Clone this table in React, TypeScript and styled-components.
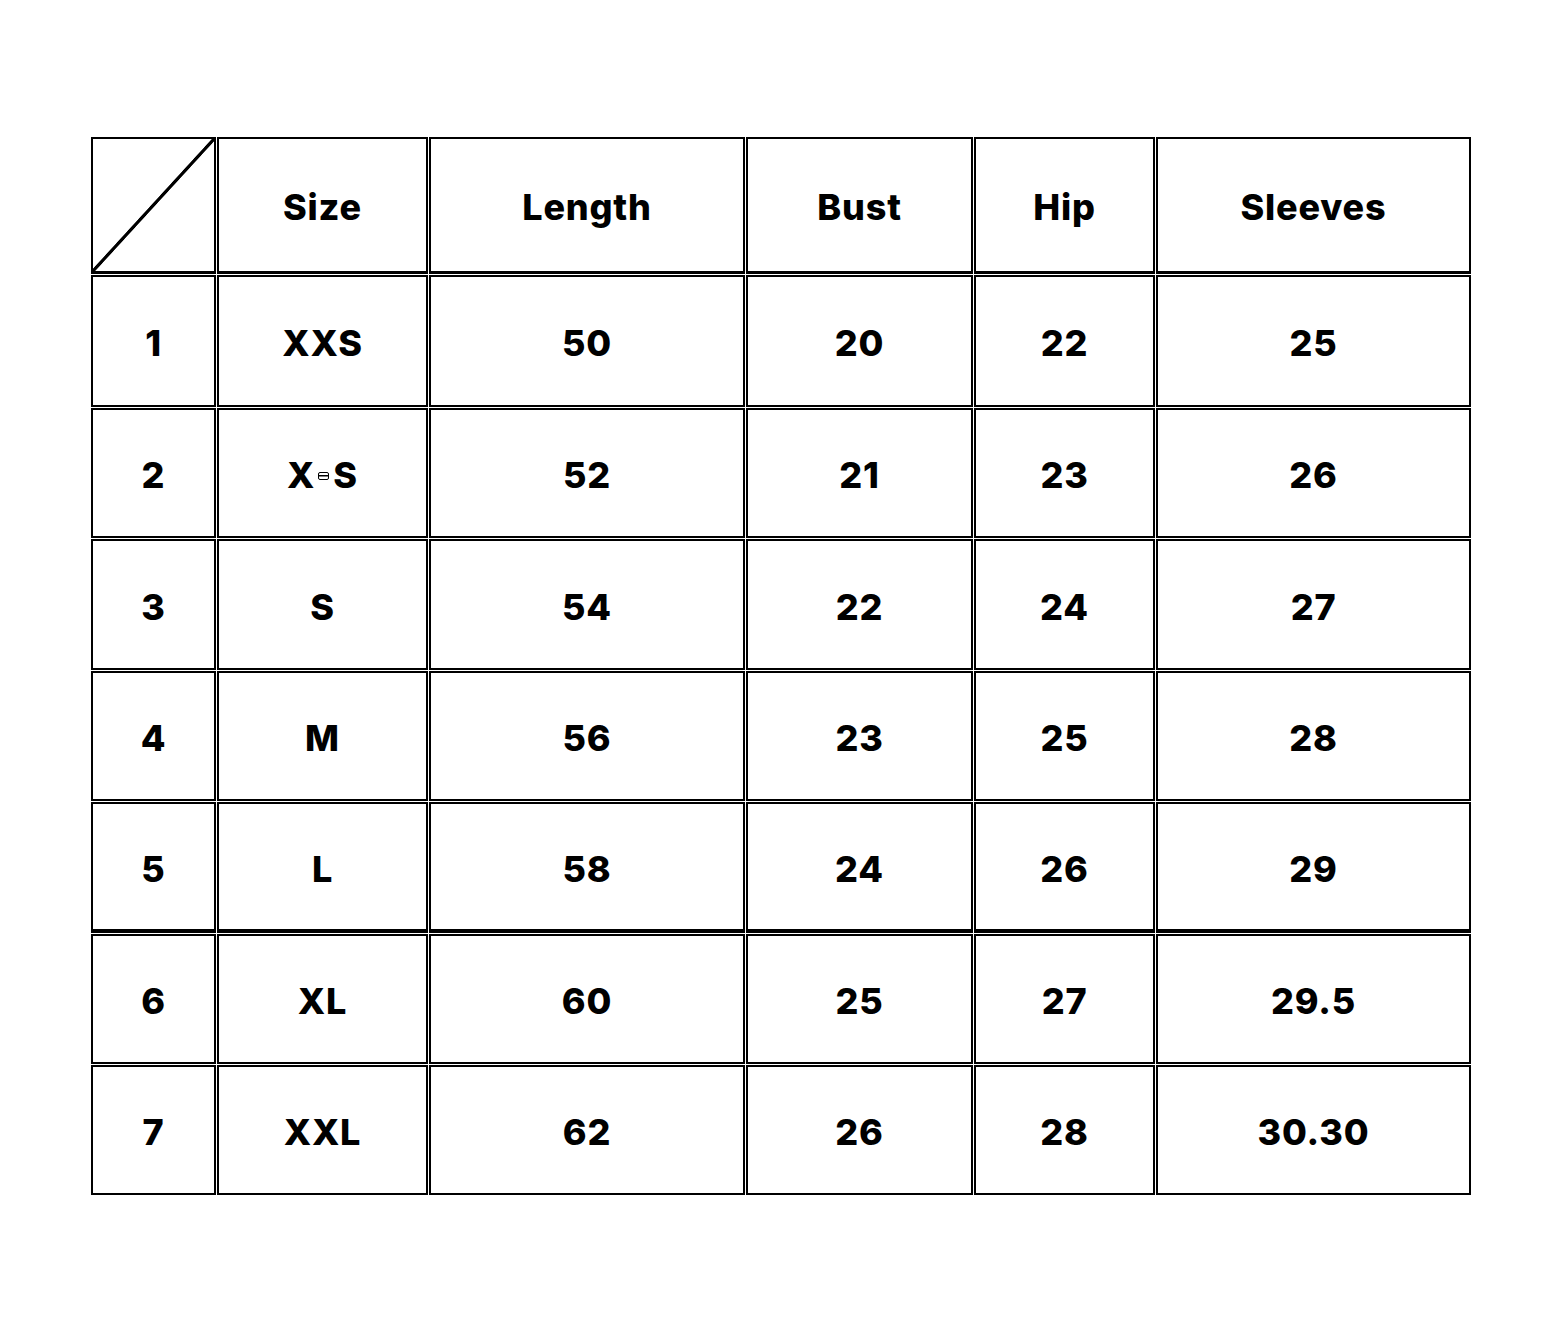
import React from "react";
import styled, { createGlobalStyle } from "styled-components";

const GlobalStyle = createGlobalStyle`
  html, body {
    margin: 0;
    padding: 0;
    background: #fff;
  }
  body {
    font-family: "Inter", "Noto Sans", sans-serif;
    color: #000;
  }
`;

const Page = styled.div`
  width: 1562px;
  height: 1328px;
  padding: 137px 0 0 91px;
  box-sizing: border-box;
`;

const Grid = styled.div<{ $rows: number[] }>`
  display: grid;
  grid-template-columns: 125px 211px 316px 227px 181px 315px;
  grid-template-rows: ${(p) => p.$rows.map((r) => `${r}px`).join(" ")};
  gap: 1px;
  width: 1380px;
`;

const Cell = styled.div<{ $bottom?: number; $diag?: boolean }>`
  box-sizing: border-box;
  border: 2px solid #000;
  border-bottom-width: ${(p) => p.$bottom ?? 2}px;
  display: flex;
  align-items: center;
  justify-content: center;
  padding-top: 4px;
  font-size: 36px;
  font-weight: 800;
  letter-spacing: 0.8px;
  ${(p) =>
    p.$diag &&
    `background: linear-gradient(to bottom right, transparent calc(50% - 2px), #000 calc(50% - 1.2px), #000 calc(50% + 1.2px), transparent calc(50% + 2px));`}
`;

const Mark = styled.span`
  display: inline-block;
  width: 9px;
  height: 6px;
  border: 1.5px solid #000;
  border-radius: 2px;
  margin: 0 4px 0 3px;
  position: relative;
  top: 1px;
  background: linear-gradient(#000, #000) center / 100% 1.5px no-repeat;
`;

const headers = ["Size", "Length", "Bust", "Hip", "Sleeves"];

const rows: (string | React.ReactNode)[][] = [
  ["1", "XXS", "50", "20", "22", "25"],
  ["2", <>X<Mark />S</>, "52", "21", "23", "26"],
  ["3", "S", "54", "22", "24", "27"],
  ["4", "M", "56", "23", "25", "28"],
  ["5", "L", "58", "24", "26", "29"],
  ["6", "XL", "60", "25", "27", "29.5"],
  ["7", "XXL", "62", "26", "28", "30.30"],
];

const bottoms = [2, 2, 2, 2, 4, 2, 2];

export default function App() {
  return (
    <>
      <GlobalStyle />
      <Page>
        <Grid $rows={[137, 132, 130, 131, 130, 131, 130, 130]}>
          <Cell $diag $bottom={3} />
          {headers.map((h) => (
            <Cell key={h} $bottom={3}>
              {h}
            </Cell>
          ))}
          {rows.map((row, ri) =>
            row.map((v, ci) => (
              <Cell key={`${ri}-${ci}`} $bottom={bottoms[ri]}>
                {v}
              </Cell>
            ))
          )}
        </Grid>
      </Page>
    </>
  );
}
